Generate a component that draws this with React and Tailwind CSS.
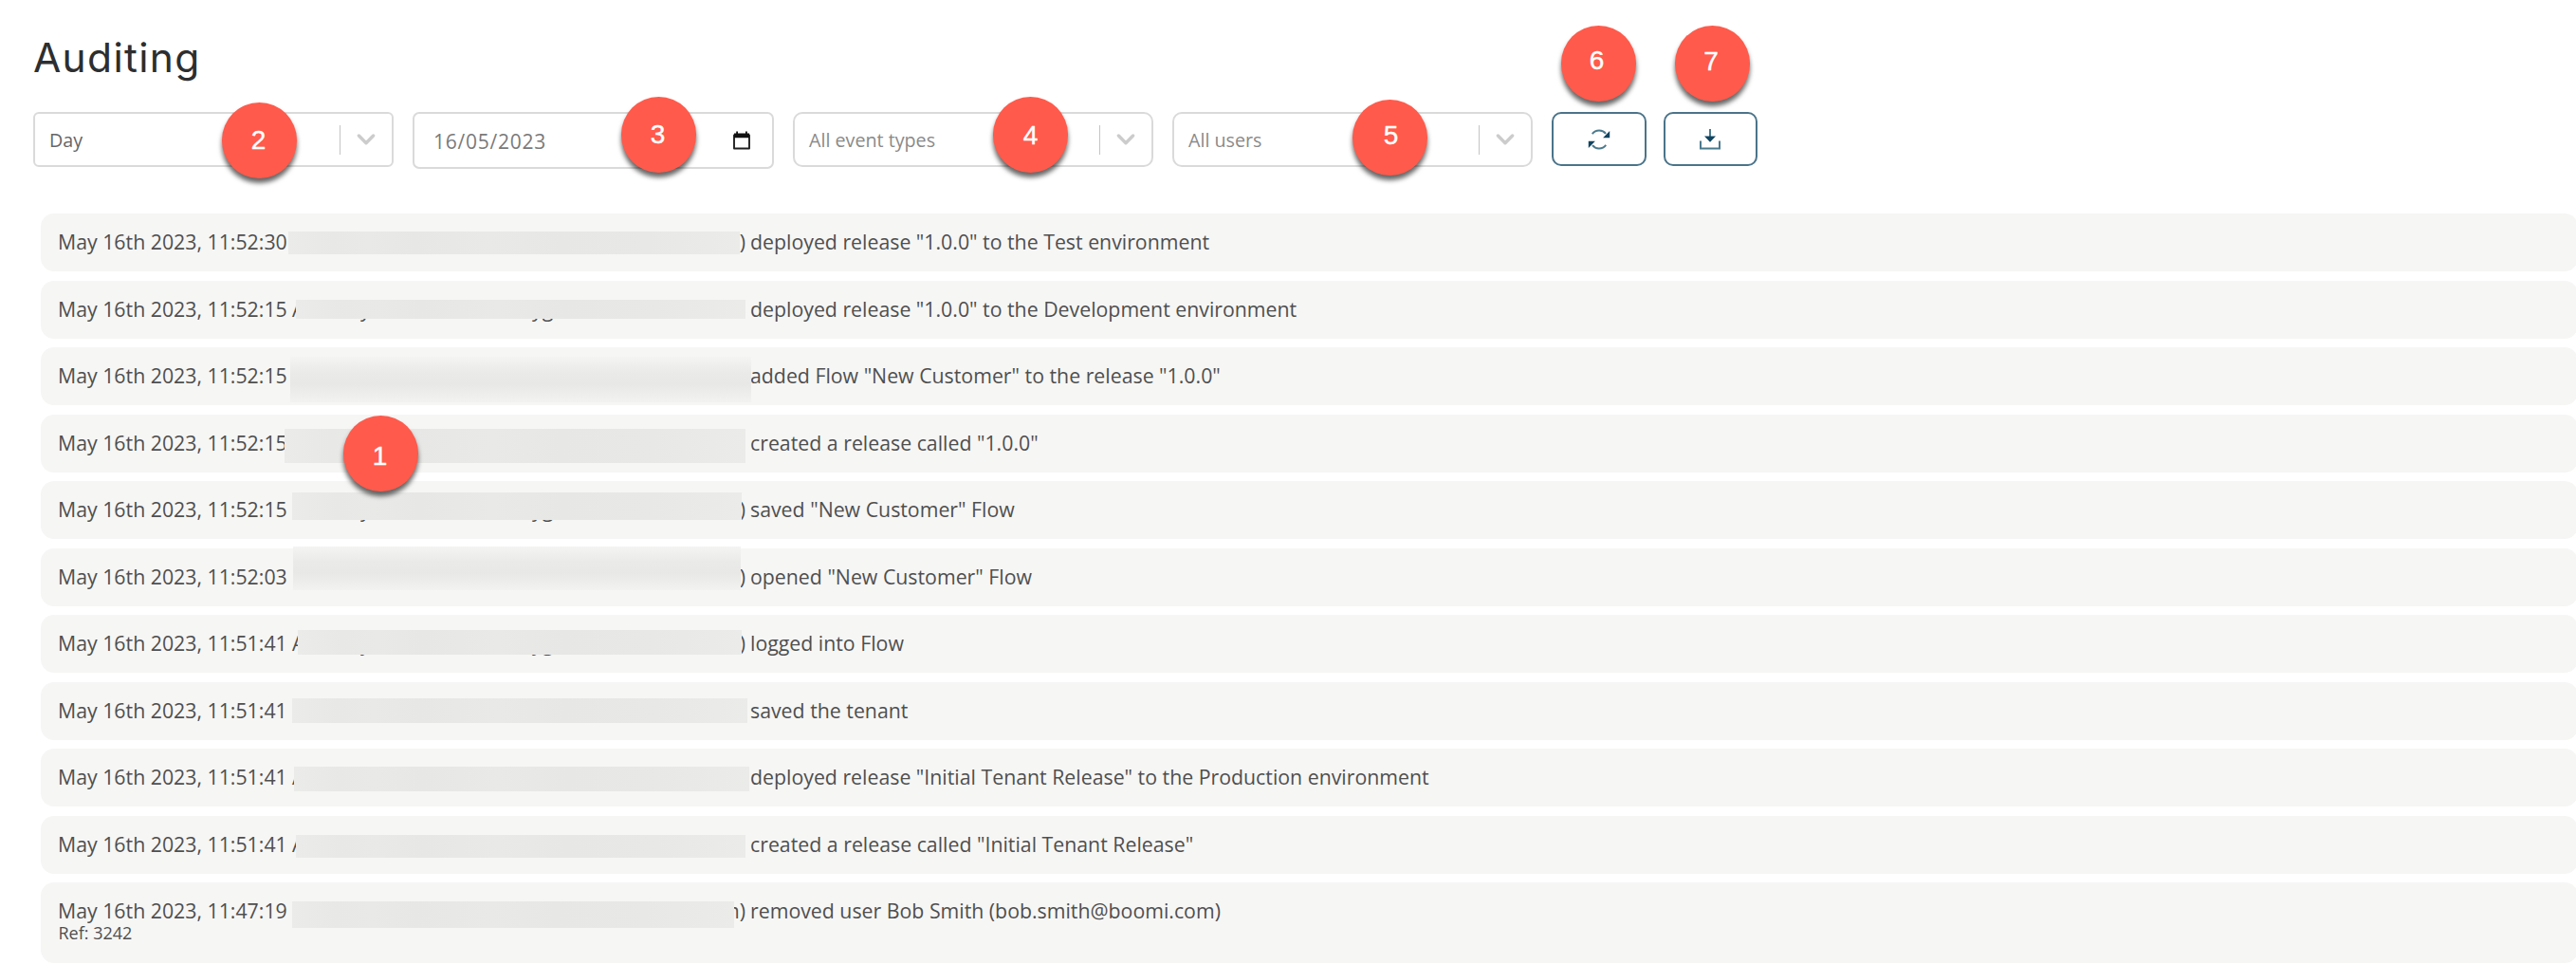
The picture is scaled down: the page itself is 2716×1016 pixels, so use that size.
const ENTRIES = [
  { time: "11:52:30", text: 'deployed release "1.0.0" to the Test environment', mask: "left-[261px] top-[19px] w-[476px] h-[24px]", end: ")" },
  { time: "11:52:15", text: 'deployed release "1.0.0" to the Development environment', mask: "left-[269px] top-[20.5px] w-[474px] h-[20px]", start: "A", low: true },
  { time: "11:52:15", text: 'added Flow "New Customer" to the release "1.0.0"', mask: "left-[263px] top-[10px] w-[486px] h-[47.5px]", soft: true },
  { time: "11:52:15", text: 'created a release called "1.0.0"', mask: "left-[257px] top-[15.5px] w-[486px] h-[36px]" },
  { time: "11:52:15", text: 'saved "New Customer" Flow', mask: "left-[265px] top-[12px] w-[474px] h-[29px]", end: ")", low: true },
  { time: "11:52:03", text: 'opened "New Customer" Flow', mask: "left-[266px] top-[-1.5px] w-[472px] h-[46px]", end: ")", soft: true },
  { time: "11:51:41", text: "logged into Flow", mask: "left-[271px] top-[16px] w-[468px] h-[26px]", start: "A", end: ")", low: true },
  { time: "11:51:41", text: "saved the tenant", mask: "left-[265px] top-[17.5px] w-[480px] h-[26px]" },
  { time: "11:51:41", text: 'deployed release "Initial Tenant Release" to the Production environment', mask: "left-[267px] top-[19px] w-[479.5px] h-[26px]", start: "A" },
  { time: "11:51:41", text: 'created a release called "Initial Tenant Release"', mask: "left-[269px] top-[20.5px] w-[474px] h-[24px]", start: "A", high: true },
  { time: "11:47:19", text: "removed user Bob Smith (bob.smith@boomi.com)", note: "Ref: 3242", mask: "left-[265px] top-[20px] w-[466px] h-[28px]", end: "m)" },
];

function Badge({ n, place, nudge = "" }) {
  return (
    <span className={`absolute z-10 flex h-[79.5px] w-[79px] items-center justify-center rounded-full bg-[#ff5a4b] font-['Liberation_Sans',sans-serif] text-[28px] leading-none text-white shadow-[0_5px_5px_rgba(0,0,0,0.6)] [-webkit-text-stroke:0.4px_white] ${place}`}>
      <span className={`relative ${nudge}`}>{n}</span>
    </span>
  );
}

function Select({ label, tone, radius, children }) {
  return (
    <div className={`relative flex h-[58px] w-[380px] items-center border-2 border-[#dadada] bg-white pl-[15px] ${radius}`}>
      <span className={`flex-1 pt-px text-[19.7px] leading-[28px] ${tone}`}>{label}</span>
      <span className="h-[31px] w-px bg-[#c4c4c4]" />
      <span className="flex w-[54px] justify-center">
        <svg className="h-[14px] w-[20px]" viewBox="0 0 20 14" fill="none" stroke="#cccccc" strokeWidth="3.4" strokeLinecap="round" strokeLinejoin="round">
          <path d="M2.4 3 10 10.8 17.6 3" />
        </svg>
      </span>
      {children}
    </div>
  );
}

function ActionButton({ children, badge }) {
  return (
    <button type="button" className="relative flex h-[57px] w-[99.5px] items-center justify-center rounded-[10px] border-2 border-[#4b748a] bg-white text-[#1b4a64]">
      {children}
      {badge}
    </button>
  );
}

function Entry({ entry }) {
  const fill = entry.soft
    ? "bg-[linear-gradient(180deg,#f4f4f3_0%,#eaeae9_35%,#e8e8e7_60%,#f2f2f1_100%)]"
    : "bg-[linear-gradient(90deg,#ebebea_0%,#e8e8e7_10%,#e9e9e8_18%,#e7e7e6_28%,#e9e9e8_45%,#e7e7e6_60%,#e8e8e7_80%,#ebebea_100%)]";
  return (
    <li className={`relative w-[2675px] rounded-[14px] bg-[#f6f6f5] pl-[18px] pt-[15px] text-[#4f4f4f] ${entry.note ? "h-[85px]" : "h-[61px]"}`}>
      <div className="flex h-[29px] whitespace-pre text-[21.3px] leading-[29px]">
        <span className="w-[247px]">May 16th 2023, {entry.time}</span>
        <span className="relative flex w-[478px] justify-between" aria-hidden="true">
          <span>{entry.start}</span>
          {entry.low && <span className="absolute left-[72px]">y</span>}
          {entry.low && <span className="absolute left-[253px]">yg</span>}
          {entry.high && (
            <span className="absolute left-[36px] flex">
              <span className="w-[80px]">h</span><span className="w-[32px]">ff</span><span className="w-[67px]">h</span><span className="w-[72px]">h</span><span className="w-[35px]">ff</span><span className="w-[41px]">h</span><span>b</span>
            </span>
          )}
          <span>{entry.end}</span>
        </span>
        <span className="ml-[5px]">{entry.text}</span>
      </div>
      {entry.note && <div className="-mt-[3px] pl-[0.5px] text-[18px] leading-[24px]">{entry.note}</div>}
      <span className={`absolute ${fill} ${entry.mask}`} />
    </li>
  );
}

export default function App() {
  return (
    <main className="h-[1016px] w-[2716px] overflow-hidden bg-white font-['Open_Sans',sans-serif]">
      <h1 className="ml-[35px] h-[118px] pt-[36px] font-['Inter',sans-serif] text-[42.5px] font-normal leading-[50px] tracking-[1.3px] text-[#2d2e2f]">Auditing</h1>

      <div className="ml-[35px] flex h-[107px] items-start gap-[20px]">
        <Select label="Day" tone="text-[#666666]" radius="rounded-[6px]">
          <Badge n={2} place="left-[197px] top-[-12px]" nudge="-left-[1px] top-0" />
        </Select>

        <div className="relative flex h-[60px] w-[381px] items-center justify-between rounded-[7px] border-2 border-[#dadada] bg-white pl-[20px] pr-[23px]">
          <span className="pt-px text-[21px] leading-[28px] tracking-[0.75px] text-[#7a7a7a]">16/05/2023</span>
          <svg className="h-[20px] w-[18px]" viewBox="0 0 18 20" fill="none">
            <path d="M1 4.5h16v14H1z" stroke="#222222" strokeWidth="1.9" strokeLinejoin="round" />
            <path d="M1 2.6h16v4.6H1zM3.2.6h1.8v3H3.2zM13 .6h1.8v3H13z" fill="#111111" />
          </svg>
          <Badge n={3} place="left-[218px] top-[-18px]" nudge="-left-[1px] top-0" />
        </div>

        <Select label="All event types" tone="text-[#8a8a8a]" radius="rounded-[10px]">
          <Badge n={4} place="left-[209px] top-[-18px]" nudge="top-[1px]" />
        </Select>
        <Select label="All users" tone="text-[#8a8a8a]" radius="rounded-[10px]">
          <Badge n={5} place="left-[188px] top-[-15px]" nudge="top-[-1.5px] left-[1px]" />
        </Select>

        <div className="flex gap-[18px]">
          <ActionButton badge={<Badge n={6} place="left-[7.5px] top-[-93px]" nudge="-left-[1.5px] top-[-3px]" />}>
            <svg className="h-[22px] w-[24px]" viewBox="0 0 24 22" fill="none">
              <path d="M4.8 5.2C8.5.4 15.6.4 19 4.8M19.2 16.8c-3.7 4.8-10.8 4.8-14.2.4" stroke="#4b7a8e" strokeWidth="2" />
              <path d="M23.2 2v7.2h-7.1zM.8 20v-7.2h7.1z" fill="#0f4460" />
            </svg>
          </ActionButton>
          <ActionButton badge={<Badge n={7} place="left-[10px] top-[-93px]" nudge="-left-[1px] top-[-2px]" />}>
            <svg className="h-[22px] w-[22px]" viewBox="0 0 22 22" fill="none">
              <path d="M1 12.4v8.2h20v-8.2M11 0v9" stroke="#4b7a8e" strokeWidth="2" />
              <path d="M5 7.6h12l-6 6.2z" fill="#0f4460" />
            </svg>
          </ActionButton>
        </div>
      </div>

      <div className="relative ml-[43px]">
        <ul className="flex flex-col gap-[9.5px]">
          {ENTRIES.map((entry, i) => (
            <Entry key={i} entry={entry} />
          ))}
        </ul>
        <Badge n={1} place="left-[319px] top-[213px]" nudge="-left-[1px] top-[3px]" />
      </div>
    </main>
  );
}
